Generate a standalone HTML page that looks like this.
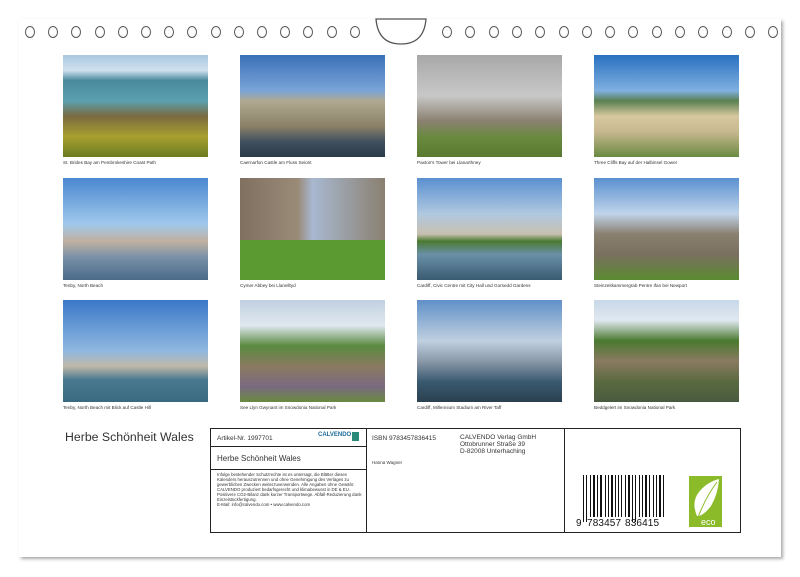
<!DOCTYPE html><html><head><meta charset="utf-8"><style>
*{margin:0;padding:0;box-sizing:border-box}
body{width:800px;height:577px;background:#fff;position:relative;overflow:hidden;font-family:"Liberation Sans",sans-serif}
.page{position:absolute;left:19px;top:19px;width:762px;height:538px;background:#fff;box-shadow:2px 2px 3px #aaa}
.hole{position:absolute;top:26px;width:10px;height:12px;border:1.3px solid #555;border-radius:50%}
.ph{position:absolute;width:145px;height:102px}
.cap{position:absolute;font-size:4.6px;color:#333;white-space:nowrap}
.t{position:absolute;border:1.3px solid #222}
.s{position:absolute;font-size:6.5px;color:#333}
</style></head><body>
<div class="page"></div>
<div id="holes"></div>
<svg style="position:absolute;left:374px;top:18px" width="54" height="28"><path d="M2 1 L52 1 Q50 26 27 26 Q4 26 2 1Z" fill="#fff" stroke="#555" stroke-width="1.3"/></svg>

<div class="ph" style="left:63px;top:55px;background:linear-gradient(#aac8e0 0,#cfe0ee 15%,#4a8a9c 25%,#5aa0b0 45%,#7a6a40 60%,#a8a030 80%,#6a7a20 100%)"></div>
<div class="ph" style="left:240px;top:55px;background:linear-gradient(#3a70b8 0,#7aa4d8 35%,#b0a890 45%,#8a8068 70%,#405060 85%,#2a3a48 100%)"></div>
<div class="ph" style="left:417px;top:55px;background:linear-gradient(#a8a8a8 0,#c8c8c8 40%,#8a8070 65%,#6a8a40 80%,#5a7a30 100%)"></div>
<div class="ph" style="left:594px;top:55px;background:linear-gradient(#2a70c0 0,#80b0e0 35%,#5a8050 45%,#d8c8a0 60%,#c8b890 75%,#6a8a40 100%)"></div>

<div class="ph" style="left:63px;top:178px;background:linear-gradient(#4a88d0 0,#a0c8ec 45%,#c0b0a0 62%,#7890a8 78%,#4a6a88 100%)"></div>
<div class="ph" style="left:240px;top:178px;background:linear-gradient(90deg,#807060 0,#9a8a78 40%,#a8b8d0 50%,#8a8070 100%)"><div style="position:absolute;left:0;bottom:0;width:145px;height:40px;background:#5a9a30"></div></div>
<div class="ph" style="left:417px;top:178px;background:linear-gradient(#5a90d0 0,#b0c8e0 35%,#c8c0b0 55%,#4a7a30 62%,#6a90a8 75%,#3a5a70 100%)"></div>
<div class="ph" style="left:594px;top:178px;background:linear-gradient(#5a90d0 0,#c0d4ea 35%,#8a8070 55%,#7a7060 75%,#5a8a30 100%)"></div>

<div class="ph" style="left:63px;top:300px;background:linear-gradient(#3a78c8 0,#90b8e0 50%,#c0b8a8 65%,#4a7a90 78%,#3a6a80 100%)"></div>
<div class="ph" style="left:240px;top:300px;background:linear-gradient(#c0d0e0 0,#e0e8f0 25%,#5a8a40 45%,#8a7a60 65%,#7a6a80 85%,#6a8a40 100%)"></div>
<div class="ph" style="left:417px;top:300px;background:linear-gradient(#6090c8 0,#c0d0e0 40%,#8a98a8 60%,#3a5a70 80%,#2a4050 100%)"></div>
<div class="ph" style="left:594px;top:300px;background:linear-gradient(#c8d8e8 0,#e0e8f0 20%,#4a7a30 40%,#8a7a60 60%,#5a6a40 80%,#4a5a40 100%)"></div>

<div class="cap" style="left:63px;top:160px">St. Brides Bay am Pembrokeshire Coast Path</div>
<div class="cap" style="left:240px;top:160px">Caernarfon Castle am Fluss Seiont</div>
<div class="cap" style="left:417px;top:160px">Paxton's Tower bei Llanarthney</div>
<div class="cap" style="left:594px;top:160px">Three Cliffs Bay auf der Halbinsel Gower</div>
<div class="cap" style="left:63px;top:283px">Tenby, North Beach</div>
<div class="cap" style="left:240px;top:283px">Cymer Abbey bei Llanelltyd</div>
<div class="cap" style="left:417px;top:283px">Cardiff, Civic Centre mit City Hall und Gorsedd Gardens</div>
<div class="cap" style="left:594px;top:283px">Steinzeitkammergrab Pentre Ifan bei Newport</div>
<div class="cap" style="left:63px;top:405px">Tenby, North Beach mit Blick auf Castle Hill</div>
<div class="cap" style="left:240px;top:405px">See Llyn Gwynant im Snowdonia National Park</div>
<div class="cap" style="left:417px;top:405px">Cardiff, Millennium Stadium am River Taff</div>
<div class="cap" style="left:594px;top:405px">Beddgelert im Snowdonia National Park</div>

<div style="position:absolute;left:65px;top:430px;font-size:12.3px;color:#333">Herbe Schönheit Wales</div>

<div class="t" style="left:210px;top:428px;width:531px;height:105px"></div>
<div class="t" style="left:366px;top:428px;width:1px;height:105px;border-width:0 0 0 1.3px"></div>
<div class="t" style="left:564px;top:428px;width:1px;height:105px;border-width:0 0 0 1.3px"></div>
<div class="t" style="left:210px;top:446px;width:157px;height:1px;border-width:1.3px 0 0 0"></div>
<div class="t" style="left:210px;top:469px;width:157px;height:1px;border-width:1.3px 0 0 0"></div>
<div class="s" style="left:217px;top:435px">Artikel-Nr. 1997701</div>
<div style="position:absolute;left:318px;top:432px;font-size:6px;color:#1a6a9a;font-weight:bold">CALVENDO</div>
<div style="position:absolute;left:352px;top:432px;width:7px;height:9px;background:#2a8a7a"></div>
<div class="s" style="left:217px;top:454px;font-size:8px">Herbe Schönheit Wales</div>
<div class="s" style="left:217px;top:472px;font-size:4.3px;line-height:5px;width:148px">Infolge bestehender Schutzrechte ist es untersagt, die Blätter dieses Kalenders herauszutrennen und ohne Genehmigung des Verlages zu gewerblichen Zwecken weiterzuverwenden. Alle Angaben ohne Gewähr.<br>CALVENDO produziert bedarfsgerecht und klimabewusst in DE &amp; EU. Positivere CO2-Bilanz dank kurzer Transportwege. Abfall-Reduzierung dank Einzelstückfertigung.<br>E-Mail: info@calvendo.com • www.calvendo.com</div>
<div class="s" style="left:372px;top:435px">ISBN 9783457836415</div>
<div class="s" style="left:372px;top:460px;font-size:4.5px">Hanna Wagner</div>
<div class="s" style="left:460px;top:434px;line-height:7px">CALVENDO Verlag GmbH<br>Ottobrunner Straße 39<br>D-82008 Unterhaching</div>

<svg style="position:absolute;left:575px;top:475px" width="95" height="55">
<g fill="#111" id="bars"></g>
<text x="1" y="51" font-family="Liberation Sans" font-size="10" fill="#111">9</text>
<text x="12" y="51" font-family="Liberation Sans" font-size="10" fill="#111" textLength="34">783457</text>
<text x="50" y="51" font-family="Liberation Sans" font-size="10" fill="#111" textLength="34">836415</text>
</svg>
<div style="position:absolute;left:689px;top:476px;width:33px;height:51px;background:#8cbb2a"></div>
<svg style="position:absolute;left:689px;top:476px" width="33" height="51"><path d="M8 40 Q2 26 10 16 Q18 6 30 3 Q29 18 22 30 Q16 38 10 40Z" fill="#fff"/><path d="M8 44 Q16 22 28 6" stroke="#8cbb2a" stroke-width="1" fill="none"/><text x="12" y="49" font-family="Liberation Sans" font-size="9" fill="#fff">eco</text></svg>

<script>
var h=document.getElementById('holes'),s='';
for(var i=0;i<15;i++){s+='<div class="hole" style="left:'+(25+i*23.2)+'px"></div>';}
for(var i=0;i<15;i++){s+='<div class="hole" style="left:'+(442+i*23.3)+'px"></div>';}
h.innerHTML=s;
var p=[1,1,1,2,1,1,2,1,1,1,2,2,1,1,1,1,2,1,1,1,1,1,1,2,1,1,2,1,1,1,1,2,1,1,1,1,2,1,1,2,1,1,1,1,2,1,1,1,1,1,1,2,1,1,1];
var x=8,b='',k=0;
while(x<91&&k<p.length){if(k%2==0){var lg=(k<4||k>p.length-5||(k>26&&k<31));b+='<rect x="'+x+'" y="0" width="'+p[k]+'" height="'+(lg?47:42)+'"/>';}x+=p[k]+0.5;k++;}
document.getElementById('bars').innerHTML=b;
</script>
</body></html>
